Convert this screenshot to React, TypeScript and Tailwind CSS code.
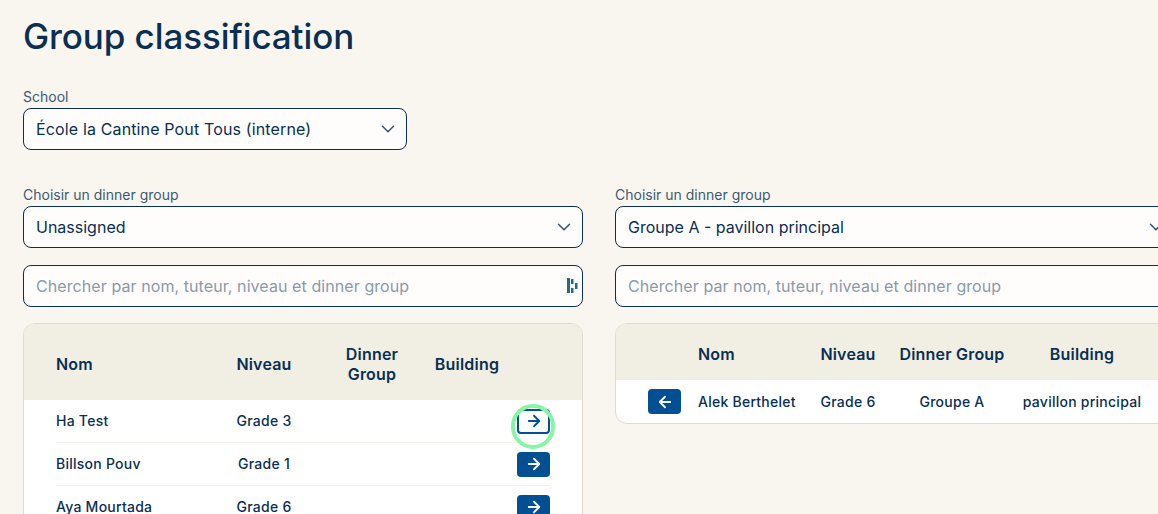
import { ArrowLeft, ArrowRight, ChevronDown } from "lucide-react";

const leftRows = [
    { name: "Ha Test", grade: "Grade 3" },
    { name: "Billson Pouv", grade: "Grade 1" },
    { name: "Aya Mourtada", grade: "Grade 6" },
];

const SelectBox = ({ children }: { children: React.ReactNode }) => (
    <div className="flex h-[42px] items-center justify-between rounded-lg border border-[#0a2f52] bg-[#fefdfb] pl-3 pr-[7px] text-[16px] text-[#0a2f52]">
        <span>{children}</span>
        <ChevronDown size={22} strokeWidth={1.75} className="text-[#3d5a75]" />
    </div>
);

const SearchBox = ({ icon }: { icon?: boolean }) => (
    <div className="flex h-[42px] items-center justify-between rounded-lg border border-[#0a2f52] bg-[#fefdfb] pl-3 pr-1 text-[16px] tracking-[0.08px] text-[#8a9aa8]">
        <span>Chercher par nom, tuteur, niveau et dinner group</span>
        {icon && (
            <svg width="12" height="16" viewBox="0 0 12 16" className="text-[#1f6f80]">
                <rect x="1" y="0" width="3" height="15" fill="currentColor" />
                <rect x="5" y="1" width="2.5" height="5" fill="currentColor" />
                <rect x="5" y="10" width="2.5" height="5" fill="currentColor" />
                <rect x="9" y="5" width="2.5" height="6" fill="currentColor" />
            </svg>
        )}
    </div>
);

const Field = ({ label, children }: { label: string; children: React.ReactNode }) => (
    <div className="flex flex-col">
        <label className="mb-[2px] h-[18px] text-[14px] leading-[18px] text-[#3d5a75]">{label}</label>
        {children}
    </div>
);

export default function App() {
    return (
        <div className="h-[514px] w-[1158px] overflow-hidden bg-[#f9f6f0] px-[23px] font-['Inter','Noto_Sans',sans-serif] text-[#0a2f52]">
            <h1 className="pt-[14px] text-[35px] font-medium leading-[44px] tracking-[-0.1px] text-[#0a2f52]">Group classification</h1>

            <div className="mt-[30px] w-[384px]">
                <Field label="School">
                    <SelectBox><span className="tracking-[0.14px]">École la Cantine Pout Tous (interne)</span></SelectBox>
                </Field>
            </div>

            <div className="mt-[36px] flex w-[1152px] gap-8">
                <div className="flex w-[560px] shrink-0 flex-col">
                    <Field label="Choisir un dinner group">
                        <SelectBox>Unassigned</SelectBox>
                    </Field>
                    <div className="mt-[17px]">
                        <SearchBox icon />
                    </div>
                    <div className="mt-4 overflow-hidden rounded-xl border border-[#e0dbcf] bg-white">
                        <div className="grid h-[76px] grid-cols-[162px_92px_124px_66px_50px] items-center bg-[#f1eee4] pl-8 pt-1 text-center text-[16px] font-semibold leading-5 tracking-[0.2px]">
                            <span className="text-left">Nom</span>
                            <span>Niveau</span>
                            <span>Dinner<br />Group</span>
                            <span>Building</span>
                            <span />
                        </div>
                        <div className="px-8 text-[14px] font-medium tracking-[0.25px]">
                            {leftRows.map((row, i) => (
                                <div
                                    key={row.name}
                                    className="grid h-[43px] grid-cols-[162px_92px_124px_66px_50px] items-center border-b border-[#f4f2ec] text-center"
                                >
                                    <span className="pb-[2px] text-left">{row.name}</span>
                                    <span className="pb-[2px]">{row.grade}</span>
                                    <span />
                                    <span />
                                    <div className="relative flex justify-end">
                                        {i === 0 ? (
                                            <button className="flex h-[25px] w-[33px] items-center justify-center rounded border-2 border-[#034f93] bg-white text-[#034f93]">
                                                <ArrowRight size={18} strokeWidth={2.4} />
                                            </button>
                                        ) : (
                                            <button className="flex h-[25px] w-[33px] items-center justify-center rounded bg-[#034f93] text-white">
                                                <ArrowRight size={18} strokeWidth={2.4} />
                                            </button>
                                        )}
                                        {i === 0 && (
                                            <div className="absolute right-[-5px] top-[-5px] h-[45px] w-[44px] rounded-full border-4 border-[#86f5a5]" />
                                        )}
                                    </div>
                                </div>
                            ))}
                        </div>
                    </div>
                </div>

                <div className="flex w-[560px] shrink-0 flex-col">
                    <Field label="Choisir un dinner group">
                        <SelectBox>Groupe A - pavillon principal</SelectBox>
                    </Field>
                    <div className="mt-[17px]">
                        <SearchBox />
                    </div>
                    <div className="mt-4 self-start overflow-hidden rounded-xl border border-[#e0dbcf] bg-white">
                        <div className="grid h-[56px] grid-cols-[50px_112px_76px_132px_128px] items-center bg-[#f1eee4] px-8 pt-1 text-center text-[16px] font-semibold tracking-[0.2px]">
                            <span />
                            <span className="text-left">Nom</span>
                            <span>Niveau</span>
                            <span>Dinner Group</span>
                            <span>Building</span>
                        </div>
                        <div className="grid h-[43px] grid-cols-[50px_112px_76px_132px_128px] items-center px-8 text-center text-[14px] font-medium tracking-[0.25px]">
                            <button className="flex h-[25px] w-[33px] items-center justify-center rounded bg-[#034f93] text-white">
                                <ArrowLeft size={18} strokeWidth={2.4} />
                            </button>
                            <span className="text-left">Alek Berthelet</span>
                            <span>Grade 6</span>
                            <span>Groupe A</span>
                            <span>pavillon principal</span>
                        </div>
                    </div>
                </div>
            </div>
        </div>
    );
}
